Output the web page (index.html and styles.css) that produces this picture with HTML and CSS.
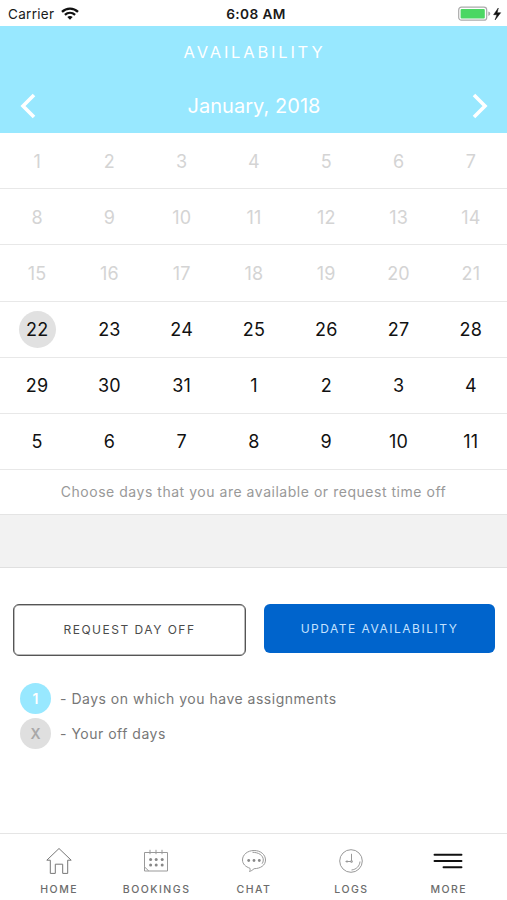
FILE: index.html
```html
<!DOCTYPE html>
<html lang="en">
<head>
<meta charset="utf-8">
<title>Availability</title>
<link rel="stylesheet" href="styles.css">
</head>
<body>
<div class="screen">
  <div class="status">
    <div class="carrier"><span>Carrier</span>
      <svg width="18" height="13" viewBox="0 0 18 13" fill="none" stroke="#111" stroke-width="2.3"><path d="M1 4.9C5.5.5 12.5.5 17 4.9M3.9 7.8c3-2.7 7.2-2.7 10.2 0"/><path d="M6.3 10.1c1.6-1.4 3.8-1.4 5.4 0L9 12.8z" fill="#111" stroke="none"/></svg>
    </div>
    <div class="time">6:08 AM</div>
    <svg class="battery" width="44" height="16" viewBox="0 0 44 16"><rect x=".7" y="1.2" width="28" height="13" rx="2.8" fill="#fff" stroke="#aaa" stroke-width="1.2"/><rect x="2.6" y="3" width="24.2" height="9.4" rx="1" fill="#4bd763"/><path d="M30.3 5.5q2 .6 2 2.2t-2 2.2z" fill="#aaa"/><path d="M40.3 2 35.6 8.7h3.3L37.1 14l5.6-7.3h-3.5z" fill="#111" stroke="#111" stroke-width=".5"/></svg>
  </div>
  <header class="header">
    <h1 class="title">AVAILABILITY</h1>
    <div class="month-nav">
      <svg width="16" height="26" viewBox="0 0 16 26" fill="none" stroke="#fff" stroke-width="3.6"><path d="M14 2 3 13l11 11"/></svg>
      <span class="month">January, 2018</span>
      <svg width="16" height="26" viewBox="0 0 16 26" fill="none" stroke="#fff" stroke-width="3.6"><path d="m2 2 11 11L2 24"/></svg>
    </div>
  </header>
  <main class="calendar">
    <div class="week past"><span>1</span><span>2</span><span>3</span><span>4</span><span>5</span><span>6</span><span>7</span></div>
    <div class="week past"><span>8</span><span>9</span><span>10</span><span>11</span><span>12</span><span>13</span><span>14</span></div>
    <div class="week past"><span>15</span><span>16</span><span>17</span><span>18</span><span>19</span><span>20</span><span>21</span></div>
    <div class="week"><span class="today">22</span><span>23</span><span>24</span><span>25</span><span>26</span><span>27</span><span>28</span></div>
    <div class="week"><span>29</span><span>30</span><span>31</span><span>1</span><span>2</span><span>3</span><span>4</span></div>
    <div class="week"><span>5</span><span>6</span><span>7</span><span>8</span><span>9</span><span>10</span><span>11</span></div>
  </main>
  <p class="hint">Choose days that you are available or request time off</p>
  <div class="band"></div>
  <div class="actions">
    <button class="btn outline">REQUEST DAY OFF</button>
    <button class="btn primary">UPDATE AVAILABILITY</button>
  </div>
  <div class="legend">
    <div class="legend-row"><span class="dot assigned">1</span><span class="label">- Days on which you have assignments</span></div>
    <div class="legend-row"><span class="dot off">X</span><span class="label">- Your off days</span></div>
  </div>
  <nav class="tabs">
    <div class="tab"><svg width="28" height="28" viewBox="0 0 28 28" fill="none" stroke="#777" stroke-width="1"><path d="M5.300 13.200H1.800L14 1.500l12.200 11.700h-3.500v13.200h-5v-9.200h-7.400v9.200h-5z"/></svg><span class="tab-name">HOME</span></div>
    <div class="tab"><svg width="28" height="28" viewBox="0 0 28 28" fill="none" stroke="#999" stroke-width="1"><path d="M2.500 5.500h23v18.500H6.800l-4.300-4.100zM2.500 19.900v4.100h4.300M8 2.800v4.400M14 2.800v4.400M20 2.800v4.400"/><g fill="#888" stroke="none"><circle cx="8.600" cy="12.600" r="1.500"/><circle cx="14.200" cy="12.600" r="1.500"/><circle cx="20.200" cy="12.600" r="1.500"/><circle cx="8.600" cy="18" r="1.500"/><circle cx="14.200" cy="18" r="1.500"/><circle cx="20.200" cy="18" r="1.500"/></g></svg><span class="tab-name">BOOKINGS</span></div>
    <div class="tab"><svg width="28" height="28" viewBox="0 0 28 28" fill="none" stroke="#999" stroke-width="1"><path d="M9.500 24.500c.8-1.300.7-2.400.4-3.300C5.600 19.800 2.500 16.900 2.500 13c0-5.400 5.100-9.500 11.600-9.500S25.500 7.600 25.500 13s-5 8.500-11.400 8.700c-1.700 1.400-3 2.400-4.600 2.800z"/><path d="M12.500 5.300c6 0 10.800 3 10.800 7.700 0 1.500-.4 2.700-1.200 3.700"/><g fill="#888" stroke="none"><circle cx="8.700" cy="13.500" r="1.400"/><circle cx="14" cy="13.500" r="1.400"/><circle cx="19.300" cy="13.500" r="1.400"/></g></svg><span class="tab-name">CHAT</span></div>
    <div class="tab"><svg width="28" height="28" viewBox="0 0 28 28" fill="none" stroke="#999" stroke-width="1"><circle cx="14" cy="14" r="11.300"/><path d="M14.500 6.800v7.700H8.500M23 14.500c-.3 4.500-3.600 8-8.500 8.500"/><circle cx="14.500" cy="14.500" r="1"/><path d="M10 13.300v2.400"/></svg><span class="tab-name">LOGS</span></div>
    <div class="tab"><svg width="30" height="28" viewBox="0 0 30 28" fill="none" stroke="#111" stroke-width="1.900" stroke-linecap="round"><path d="M1.500 7.700h27M1.500 14h27M10.500 20.300h18"/></svg><span class="tab-name">MORE</span></div>
  </nav>
</div>
</body>
</html>
```
FILE: styles.css
```css
* { box-sizing: border-box; }
body { margin: 0; background: #fff; font-family: Inter, "Liberation Sans", sans-serif; }
.screen { display: flex; flex-direction: column; width: 507px; height: 900px; overflow: hidden; }
svg { display: block; flex: none; }
.status { display: grid; grid-template-columns: 1fr auto 1fr; align-items: center; height: 26px; padding: 1px 5px 0 8px; color: #1a1a1a; font-size: 13.5px; letter-spacing: .3px; }
.carrier { display: flex; align-items: center; gap: 7px; }
.time { font-weight: 600; font-size: 13.7px; letter-spacing: .4px; padding-left: 2px; }
.battery { justify-self: end; }
.header { height: 107px; background: #98e8ff; color: #fff; }
.title { margin: 0; padding: 16px 0 0 2px; font-size: 16.5px; line-height: 21px; font-weight: 400; letter-spacing: 2.8px; text-align: center; }
.month-nav { display: flex; align-items: center; justify-content: space-between; height: 26px; margin-top: 30px; padding: 0 19px 0 20px; }
.month { font-size: 20px; letter-spacing: .05px; }
.calendar { height: 337px; display: grid; grid-template-rows: repeat(6, 1fr); }
.week { display: grid; grid-template-columns: repeat(7, 1fr); align-items: center; justify-items: center; padding-left: 1px; border-bottom: 1px solid #e8e8e8; color: #111; font-size: 18px; letter-spacing: .2px; }
.past { color: #d4d4d4; padding-top: 1px; }
.today { display: grid; place-items: center; width: 37px; height: 37px; border-radius: 50%; background: #e1e1e1; }
.hint { margin: 0; height: 44px; line-height: 44px; text-align: center; color: #999; font-size: 14px; letter-spacing: .53px; }
.band { height: 54px; background: #f2f2f2; border-top: 1px solid #e4e4e4; border-bottom: 1px solid #e0e0e0; }
.actions { display: flex; align-items: flex-start; gap: 18px; padding: 36px 12px 0 13px; }
.btn { flex: 1; padding: 0 0 1px; border: 0; border-radius: 6px; font-family: inherit; font-size: 12px; letter-spacing: 1.5px; }
.outline { height: 52px; border: 1px solid #555; box-shadow: inset 0 0 0 .5px #777; background: #fff; color: #4b4b4b; }
.primary { height: 49px; background: #0064cc; color: #c5e2ff; }
.legend { display: grid; gap: 4px; padding: 27px 0 0 20px; }
.legend-row { display: flex; align-items: center; gap: 9px; height: 31px; color: #777; font-size: 14px; letter-spacing: .5px; }
.label { padding-bottom: 1px; }
.dot { display: grid; place-items: center; width: 31px; height: 31px; border-radius: 50%; font-weight: 600; letter-spacing: 0; }
.assigned { background: #98e8ff; color: #fff; }
.off { background: #dfdfdf; color: #a8a8a8; }
.tabs { display: flex; height: 67px; margin-top: auto; padding: 0 10px; border-top: 1px solid #e5e5e5; }
.tab { flex: 1; display: flex; flex-direction: column; align-items: center; padding-top: 13px; }
.tab-name { margin-top: 7px; padding-left: 1px; color: #6c6c6c; font-size: 10.5px; font-weight: 500; line-height: 16px; letter-spacing: 1.5px; }
```
